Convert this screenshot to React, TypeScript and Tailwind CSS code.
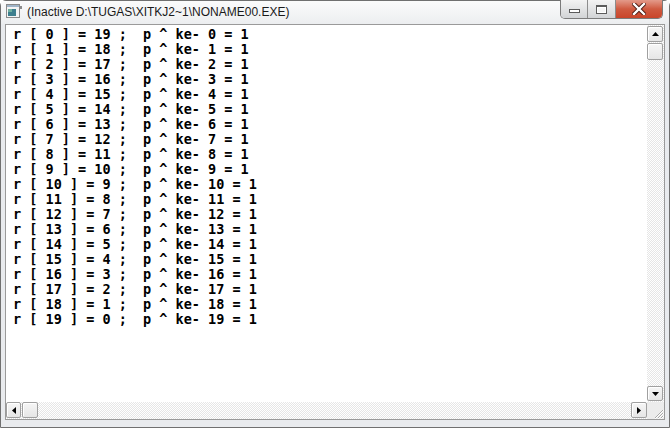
import React from 'react';

const rows = Array.from({ length: 20 }, (_, i) => `r [ ${i} ] = ${19 - i} ;  p ^ ke- ${i} = 1`);

const track =
  'bg-[image:repeating-conic-gradient(#e6e6e6_0%_25%,#ffffff_0%_50%)] bg-[length:2px_2px]';

function Arrow({ dir }: { dir: 'up' | 'down' | 'left' | 'right' }) {
  const pts = {
    up: '0,4 7,4 3.5,0',
    down: '0,0 7,0 3.5,4',
    left: '4,0 4,7 0,3.5',
    right: '0,0 0,7 4,3.5',
  }[dir];
  const vertical = dir === 'up' || dir === 'down';
  return (
    <svg width={vertical ? 7 : 4} height={vertical ? 4 : 7} viewBox={vertical ? '0 0 7 4' : '0 0 4 7'}>
      <polygon points={pts} fill="#000" />
    </svg>
  );
}

function SButton({ children, className }: { children?: React.ReactNode; className?: string }) {
  return (
    <div
      className={`flex items-center justify-center rounded-[2px] border border-[#a0a0a0] bg-gradient-to-b from-[#f6f6f6] to-[#e6e6e6] shadow-[inset_1px_1px_0_#ffffff] ${className ?? ''}`}
    >
      {children}
    </div>
  );
}

function DosIcon() {
  return (
    <svg width="16" height="15" viewBox="0 0 16 15">
      <rect x="0.5" y="0.5" width="13" height="13" fill="#f4f4f4" stroke="#8a8a8a" />
      <rect x="1" y="1" width="12" height="2" fill="#9fb4c8" />
      <rect x="2" y="5" width="8" height="7" fill="#3d7f8e" />
      <rect x="2" y="5" width="4" height="3" fill="#6fb0a0" />
      <rect x="14.5" y="2" width="1" height="3" fill="#222" />
    </svg>
  );
}

export default function App() {
  return (
    <div className="w-[670px] h-[428px] bg-white overflow-hidden">
      <div className="flex h-full flex-col rounded-t-[6px] border border-[#707070] bg-[#e9ebee]">
        {/* title bar */}
        <div className="flex h-[23px] items-start bg-gradient-to-b from-[#fbfbfb] to-[#eceef0]">
          <div className="flex h-[21px] flex-1 items-center pl-[5px]">
            <DosIcon />
            <span className="ml-[5px] font-['Liberation_Sans',Arial,sans-serif] text-[12px] text-[#1a1a1a] whitespace-pre">
              (Inactive D:\TUGAS\XITKJ2~1\NONAME00.EXE)
            </span>
          </div>
          <div className="mr-[6px] flex h-[19px] -mt-px overflow-hidden rounded-b-[5px] border border-t-0 border-[#7b7b7b]">
            <div className="flex w-[27px] items-end justify-center border-r border-[#8c8c8c] bg-gradient-to-b from-[#f3f3f3] to-[#d2d4d6] pb-[5px]">
              <div className="h-[4px] w-[11px] border border-[#5b5b5b] bg-white" />
            </div>
            <div className="flex w-[28px] items-center justify-center border-r border-[#8c8c8c] bg-gradient-to-b from-[#f3f3f3] to-[#d2d4d6]">
              <div className="h-[9px] w-[11px] border border-[#5b5b5b] border-t-2 bg-[#f5f5f5] shadow-[inset_0_0_0_1px_#ffffff]" />
            </div>
            <div className="flex w-[46px] items-center justify-center bg-gradient-to-b from-[#e39a8a] via-[#cf5a40] to-[#c9452a]">
              <svg width="14" height="12" viewBox="0 0 14 12">
                <path d="M2 1 L12 11 M12 1 L2 11" stroke="#4a1a12" strokeWidth="4.2" strokeLinecap="square" />
                <path d="M2 1 L12 11 M12 1 L2 11" stroke="#ffffff" strokeWidth="2.4" strokeLinecap="square" />
              </svg>
            </div>
          </div>
        </div>

        {/* body */}
        <div className="flex flex-1 flex-col px-[4px] pb-[7px]">
          <div className="flex flex-1 flex-col border border-[#9a9a9a]">
            <div className="flex flex-1">
              <div className="flex-1 bg-white pl-[7px] pt-[2px]">
                {rows.map((r) => (
                  <div
                    key={r}
                    className="h-[15px] font-['DejaVu_Sans_Mono',monospace] text-[13.5px] font-bold leading-[15px] text-black whitespace-pre"
                  >
                    {r}
                  </div>
                ))}
              </div>
              <div className={`flex w-[17px] flex-col ${track}`}>
                <SButton className="mt-px h-[16px] w-[16px]">
                  <Arrow dir="up" />
                </SButton>
                <SButton className="mt-px h-[17px] w-[16px]" />
                <div className="flex-1" />
                <SButton className="mb-px h-[15px] w-[16px]">
                  <Arrow dir="down" />
                </SButton>
              </div>
            </div>
            <div className="flex h-[17px]">
              <div className={`flex flex-1 items-start ${track}`}>
                <SButton className="h-[16px] w-[15px]">
                  <Arrow dir="left" />
                </SButton>
                <SButton className="ml-px h-[16px] w-[16px]" />
                <div className="flex-1" />
                <SButton className="h-[16px] w-[16px]">
                  <Arrow dir="right" />
                </SButton>
              </div>
              <div className="flex w-[17px] items-end justify-end bg-[#ececec]">
                <svg width="12" height="12" viewBox="0 0 12 12">
                  <path d="M11 3 L3 11 M11 6 L6 11 M11 9 L9 11" stroke="#a9a9a9" strokeWidth="1" />
                  <path d="M12 3 L3 12 M12 6 L6 12 M12 9 L9 12" stroke="#ffffff" strokeWidth="1" />
                </svg>
              </div>
            </div>
          </div>
        </div>
      </div>
    </div>
  );
}
